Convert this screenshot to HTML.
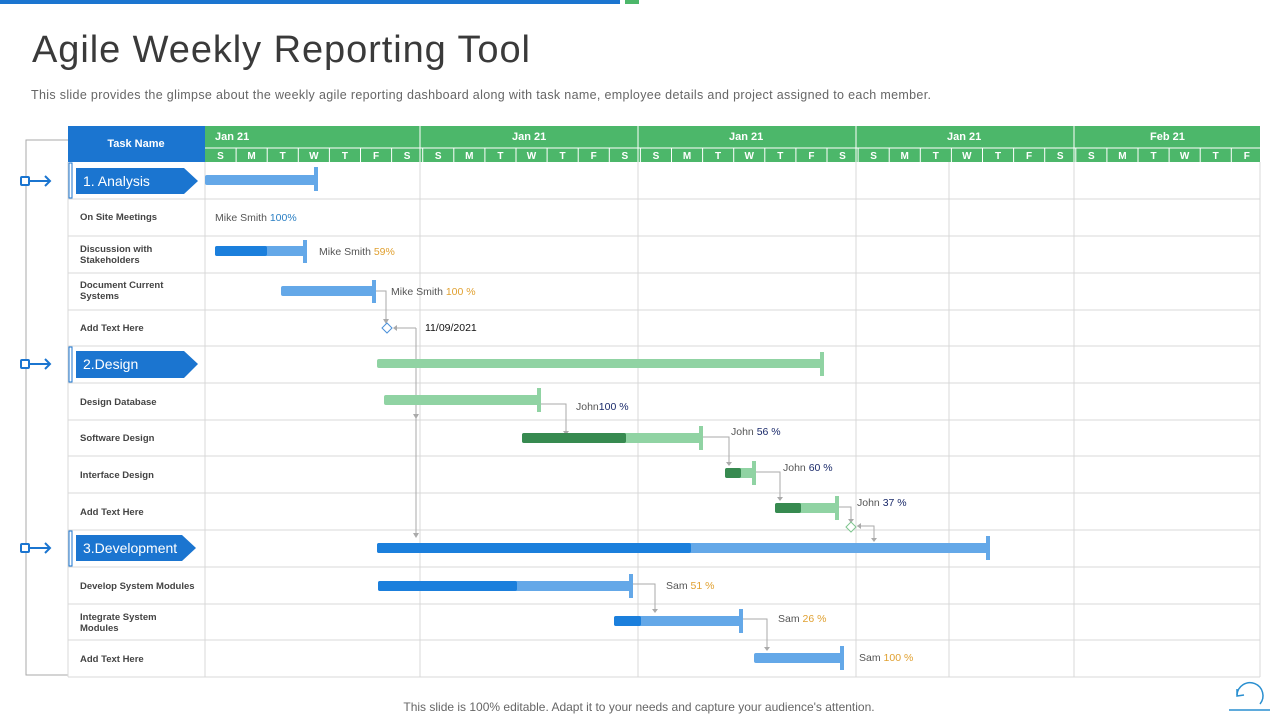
<!DOCTYPE html>
<html><head><meta charset="utf-8"><style>
body{margin:0;width:1280px;height:720px;overflow:hidden;background:#fff;font-family:"Liberation Sans",sans-serif;}
</style></head><body>
<svg width="1280" height="720" xmlns="http://www.w3.org/2000/svg" style="position:absolute;left:0;top:0" font-family="Liberation Sans, sans-serif">
<rect x="0" y="0" width="620" height="4" fill="#1b75d0"/>
<rect x="625" y="0" width="14" height="4" fill="#4cb76a"/>
<text x="32" y="62" font-size="38" fill="#3a3a3a" textLength="498" lengthAdjust="spacing">Agile Weekly Reporting Tool</text>
<text x="31" y="99" font-size="12.5" fill="#666" textLength="900" lengthAdjust="spacing">This slide provides  the glimpse about the weekly agile reporting dashboard along with task name, employee details and project assigned to each member.</text>
<path d="M68 140H26V675H68" fill="none" stroke="#aaa" stroke-width="1"/>
<rect x="68" y="126" width="137" height="36" fill="#1b75d0"/>
<text x="136" y="147" font-size="11" fill="#fff" text-anchor="middle" font-weight="bold">Task Name</text>
<rect x="205" y="126" width="1055" height="36" fill="#4cb76a"/>
<line x1="205" y1="148" x2="1260" y2="148" stroke="#fff" stroke-width="1"/>
<g stroke="#fff" stroke-width="1">
<line x1="420" y1="126" x2="420" y2="162"/><line x1="638" y1="126" x2="638" y2="162"/><line x1="856" y1="126" x2="856" y2="162"/><line x1="1074" y1="126" x2="1074" y2="162"/>
</g>
<g font-size="11" fill="#fff" font-weight="bold">
<text x="215" y="140">Jan 21</text><text x="512" y="140">Jan 21</text><text x="729" y="140">Jan 21</text><text x="947" y="140">Jan 21</text><text x="1150" y="140">Feb 21</text>
</g>
<g id="days" font-size="10" fill="#fff" font-weight="bold" text-anchor="middle"></g>
<g stroke="#d9d9d9" stroke-width="1" fill="none">
<line x1="68" y1="162" x2="68" y2="677"/><line x1="205" y1="162" x2="205" y2="677"/>
<line x1="420" y1="162" x2="420" y2="677"/><line x1="638" y1="162" x2="638" y2="677"/><line x1="856" y1="162" x2="856" y2="677"/><line x1="949" y1="162" x2="949" y2="677"/><line x1="1074" y1="162" x2="1074" y2="677"/><line x1="1260" y1="162" x2="1260" y2="677"/>
<line x1="68" y1="199" x2="1260" y2="199"/><line x1="68" y1="236" x2="1260" y2="236"/><line x1="68" y1="273" x2="1260" y2="273"/><line x1="68" y1="310" x2="1260" y2="310"/><line x1="68" y1="346" x2="1260" y2="346"/><line x1="68" y1="383" x2="1260" y2="383"/><line x1="68" y1="420" x2="1260" y2="420"/><line x1="68" y1="456" x2="1260" y2="456"/><line x1="68" y1="493" x2="1260" y2="493"/><line x1="68" y1="530" x2="1260" y2="530"/><line x1="68" y1="567" x2="1260" y2="567"/><line x1="68" y1="604" x2="1260" y2="604"/><line x1="68" y1="640" x2="1260" y2="640"/><line x1="68" y1="677" x2="1260" y2="677"/>
</g>
<g>
<rect x="69" y="163" width="3" height="35" fill="#fff" stroke="#1b75d0"/><path d="M76 168H184L198 181L184 194H76Z" fill="#1b75d0"/>
<text x="83" y="186" font-size="14" fill="#fff">1. Analysis</text>
<rect x="69" y="347" width="3" height="35" fill="#fff" stroke="#1b75d0"/><path d="M76 351H184L198 364L184 378H76Z" fill="#1b75d0"/>
<text x="83" y="369" font-size="14" fill="#fff">2.Design</text>
<rect x="69" y="531" width="3" height="35" fill="#fff" stroke="#1b75d0"/><path d="M76 535H182L196 548L182 561H76Z" fill="#1b75d0"/>
<text x="83" y="553" font-size="14" fill="#fff">3.Development</text>
</g>
<g stroke="#1b75d0" stroke-width="2" fill="#fff">
<rect x="21" y="177" width="8" height="8" rx="1"/><line x1="29" y1="181" x2="50" y2="181"/><path d="M45 176L50 181L45 186" fill="none"/>
<rect x="21" y="360" width="8" height="8" rx="1"/><line x1="29" y1="364" x2="50" y2="364"/><path d="M45 359L50 364L45 369" fill="none"/>
<rect x="21" y="544" width="8" height="8" rx="1"/><line x1="29" y1="548" x2="50" y2="548"/><path d="M45 543L50 548L45 553" fill="none"/>
</g>
<g font-size="9.5" fill="#444" font-weight="bold">
<text x="80" y="220">On Site Meetings</text>
<text x="80" y="252">Discussion with</text><text x="80" y="263">Stakeholders</text>
<text x="80" y="288">Document Current</text><text x="80" y="299">Systems</text>
<text x="80" y="331">Add Text Here</text>
<text x="80" y="405">Design Database</text>
<text x="80" y="441">Software Design</text>
<text x="80" y="478">Interface Design</text>
<text x="80" y="515">Add Text Here</text>
<text x="80" y="589">Develop System Modules</text>
<text x="80" y="620">Integrate System</text><text x="80" y="631">Modules</text>
<text x="80" y="662">Add Text Here</text>
</g>
<g stroke="#aaa" stroke-width="1" fill="none">
<path d="M375 291H386V320"/><path d="M416 328V536"/><path d="M396 328H416"/>
<path d="M540 404H566V432"/><path d="M703 437H729V463"/><path d="M755 472H780V498"/>
<path d="M838 507H851V520"/><path d="M857 526H874V540"/>
<path d="M632 584H655V610"/><path d="M742 619H767V648"/>
</g>
<g fill="#aaa">
<path d="M383 319L386 324L389 319Z"/><path d="M397 325L393 328L397 331Z"/><path d="M413 414L416 419L419 414Z"/><path d="M413 533L416 538L419 533Z"/>
<path d="M563 431L566 435L569 431Z"/><path d="M726 462L729 466L732 462Z"/><path d="M777 497L780 501L783 497Z"/>
<path d="M848 519L851 523L854 519Z"/><path d="M861 523L857 526L861 529Z"/><path d="M871 538L874 542L877 538Z"/>
<path d="M652 609L655 613L658 609Z"/><path d="M764 647L767 651L770 647Z"/>
</g>
<path d="M387 323L392 328L387 333L382 328Z" fill="#fff" stroke="#4a90d9"/>
<path d="M851 522L856 527L851 532L846 527Z" fill="#fff" stroke="#7fc58f"/>
<g>
<rect x="205" y="175" width="111" height="10" rx="2" fill="#64a8e8"/><rect x="314" y="167" width="4" height="24" fill="#64a8e8"/>
<rect x="215" y="246" width="91" height="10" rx="2" fill="#64a8e8"/><rect x="215" y="246" width="52" height="10" rx="2" fill="#1b7fdc"/><rect x="303" y="240" width="4" height="23" fill="#64a8e8"/>
<rect x="281" y="286" width="93" height="10" rx="2" fill="#64a8e8"/><rect x="372" y="280" width="4" height="23" fill="#64a8e8"/>
<rect x="377" y="359" width="445" height="9" rx="2" fill="#90d3a3"/><rect x="820" y="352" width="4" height="24" fill="#90d3a3"/>
<rect x="384" y="395" width="155" height="10" rx="2" fill="#90d3a3"/><rect x="537" y="388" width="4" height="24" fill="#90d3a3"/>
<rect x="522" y="433" width="179" height="10" rx="2" fill="#90d3a3"/><rect x="522" y="433" width="104" height="10" rx="2" fill="#378a50"/><rect x="699" y="426" width="4" height="24" fill="#90d3a3"/>
<rect x="725" y="468" width="29" height="10" rx="2" fill="#90d3a3"/><rect x="725" y="468" width="16" height="10" rx="2" fill="#378a50"/><rect x="752" y="461" width="4" height="24" fill="#90d3a3"/>
<rect x="775" y="503" width="62" height="10" rx="2" fill="#90d3a3"/><rect x="775" y="503" width="26" height="10" rx="2" fill="#378a50"/><rect x="835" y="496" width="4" height="24" fill="#90d3a3"/>
<rect x="377" y="543" width="611" height="10" rx="2" fill="#64a8e8"/><rect x="377" y="543" width="314" height="10" rx="2" fill="#1b7fdc"/><rect x="986" y="536" width="4" height="24" fill="#64a8e8"/>
<rect x="378" y="581" width="253" height="10" rx="2" fill="#64a8e8"/><rect x="378" y="581" width="139" height="10" rx="2" fill="#1b7fdc"/><rect x="629" y="574" width="4" height="24" fill="#64a8e8"/>
<rect x="614" y="616" width="127" height="10" rx="2" fill="#64a8e8"/><rect x="614" y="616" width="27" height="10" rx="2" fill="#1b7fdc"/><rect x="739" y="609" width="4" height="24" fill="#64a8e8"/>
<rect x="754" y="653" width="88" height="10" rx="2" fill="#64a8e8"/><rect x="840" y="646" width="4" height="24" fill="#64a8e8"/>
</g>
<g font-size="10.5" fill="#555">
<text x="215" y="221">Mike Smith <tspan fill="#2a7fc4">100%</tspan></text>
<text x="319" y="255">Mike Smith <tspan fill="#e0a030">59%</tspan></text>
<text x="391" y="295">Mike Smith <tspan fill="#e0a030">100 %</tspan></text>
<text x="425" y="331" fill="#111">11/09/2021</text>
<text x="576" y="410">John<tspan fill="#1a2a6a">100 %</tspan></text>
<text x="731" y="435">John <tspan fill="#1a2a6a">56 %</tspan></text>
<text x="783" y="471">John <tspan fill="#1a2a6a">60 %</tspan></text>
<text x="857" y="506">John <tspan fill="#1a2a6a">37 %</tspan></text>
<text x="666" y="589">Sam <tspan fill="#e0a030">51 %</tspan></text>
<text x="778" y="622">Sam <tspan fill="#e0a030">26 %</tspan></text>
<text x="859" y="661">Sam <tspan fill="#e0a030">100 %</tspan></text>
</g>
<text x="639" y="711" font-size="12" fill="#666" text-anchor="middle">This slide is 100% editable. Adapt it to your needs and capture your audience's attention.</text>
<g fill="none" stroke="#2a8fd0" stroke-width="1.5"><path d="M1237 695A13 13 0 1 1 1260 704"/><path d="M1229 710H1270"/><path d="M1237 689L1237 696L1244 695"/></g>
</svg>
<script>
var g=document.getElementById('days'),L="SMTWTFS",s="";
for(var i=0;i<34;i++){var x=205+i*31.1;var c=L[i%7];s+='<text x="'+(x+15.5)+'" y="159">'+c+'</text>';if(i>0)s+='<line x1="'+x+'" y1="148" x2="'+x+'" y2="162" stroke="#fff"/>';}
g.innerHTML=s;
</script>
</body></html>
